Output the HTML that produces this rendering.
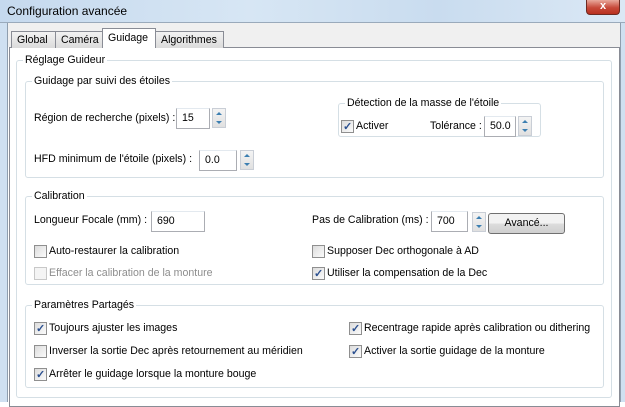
<!DOCTYPE html>
<html><head><meta charset="utf-8"><style>
*{box-sizing:border-box;margin:0;padding:0}
body{width:625px;height:402px;overflow:hidden;position:relative;background:#fff;font-family:"Liberation Sans",sans-serif;font-size:10.6px;color:#000}
.a{position:absolute;white-space:nowrap}
.title{left:0;top:0;width:625px;height:23px;background:linear-gradient(90deg,#c5d9ee 0%,#d7e6f4 40%,#c9dcef 70%,#dbe8f5 100%);border-bottom:1px solid #9aaabb}
.frame{background:#cfe0f1}
.grp{position:absolute;border:1px solid #d5dfe5;border-radius:3px}
.gl{position:absolute;background:#fff;padding:0 2px;top:-8px;left:6px;line-height:14px}
.tb{position:absolute;border:1px solid #abadb3;border-top-color:#e3e9ef;height:21px;background:#fff;padding:3px 5px;line-height:13px}
.sp{position:absolute;width:14px;height:20px;border:1px solid #c9ced6;background:linear-gradient(#f4f4f4,#e0e0e0)}
.sp:before{content:"";position:absolute;left:3px;top:3px;border:3px solid transparent;border-bottom:3px solid #3c7fb1;border-top:0}
.sp:after{content:"";position:absolute;left:3px;top:12px;border:3px solid transparent;border-top:3px solid #3c7fb1;border-bottom:0}
.cb{position:absolute;width:13px;height:13px;border:1px solid #8f8f8f;background:linear-gradient(135deg,#dcdcdc,#fbfbfb)}
.cb.k:after{content:"✓";position:absolute;left:1px;top:-1px;font-size:11px;color:#2a4f8f;font-weight:bold}
.cb.d{border-color:#c8c8c8;background:#f4f4f4}
.tab{position:absolute;top:31px;height:17px;border:1px solid #898c95;border-bottom:none;background:linear-gradient(#f2f2f2,#dbdbdb);padding:2px 5px;line-height:12px}
</style></head><body>
<div class="a title"></div>
<div class="a" style="left:7px;top:4px;font-size:12px">Configuration avancée</div>
<div class="a" style="left:586px;top:0;width:34px;height:15px;background:linear-gradient(#e9a99c,#c7493a 55%,#b8301f);border:1px solid #6d2a22;border-top:none;border-radius:0 0 4px 4px;color:#fff;font-weight:bold;text-align:center;line-height:13px;font-size:11px">x</div>
<div class="a frame" style="left:0;top:23px;width:8px;height:379px;border-right:1px solid #8f9eae"></div>
<div class="a frame" style="left:620px;top:23px;width:5px;height:379px;border-left:1px solid #8f9eae"></div>
<div class="a" style="left:8px;top:23px;width:612px;height:24px;background:#f0f0f0"></div>
<div class="a" style="left:9px;top:47px;width:611px;height:360px;border:1px solid #898c95;background:#fff"></div>
<div class="tab" style="left:11px;width:45px">Global</div>
<div class="tab" style="left:55px;width:48px">Caméra</div>
<div class="tab" style="left:155px;width:69px">Algorithmes</div>
<div class="tab" style="left:102px;top:28px;height:20px;width:54px;background:#fff;padding-top:3px">Guidage</div>

<div class="grp" style="left:16px;top:60px;width:596px;height:338px"><span class="gl">Réglage Guideur</span></div>
<div class="grp" style="left:25px;top:81px;width:579px;height:97px"><span class="gl">Guidage par suivi des étoiles</span></div>
<div class="a" style="left:34px;top:112px">Région de recherche (pixels) :</div>
<div class="tb" style="left:176px;top:108px;width:34px">15</div>
<div class="sp" style="left:212px;top:108px"></div>
<div class="grp" style="left:338px;top:103px;width:203px;height:34px"><span class="gl">Détection de la masse de l'étoile</span></div>
<div class="cb k" style="left:341px;top:120px"></div>
<div class="a" style="left:356px;top:120px">Activer</div>
<div class="a" style="left:430px;top:120px">Tolérance :</div>
<div class="tb" style="left:484px;top:116px;width:32px">50.0</div>
<div class="sp" style="left:518px;top:116px"></div>
<div class="a" style="left:34px;top:153px">HFD minimum de l'étoile (pixels) :</div>
<div class="tb" style="left:199px;top:150px;width:38px">0.0</div>
<div class="sp" style="left:240px;top:150px"></div>

<div class="grp" style="left:25px;top:196px;width:579px;height:89px"><span class="gl">Calibration</span></div>
<div class="a" style="left:34px;top:214px">Longueur Focale (mm) :</div>
<div class="tb" style="left:151px;top:211px;width:54px">690</div>
<div class="a" style="left:312px;top:214px">Pas de Calibration (ms) :</div>
<div class="tb" style="left:431px;top:211px;width:37px">700</div>
<div class="sp" style="left:472px;top:212px"></div>
<div class="a" style="left:488px;top:213px;width:77px;height:21px;border:1px solid #707070;border-radius:3px;background:linear-gradient(#f2f2f2 50%,#dddddd 50%,#cfcfcf);text-align:center;line-height:19px">Avancé...</div>
<div class="cb" style="left:34px;top:245px"></div><div class="a" style="left:49px;top:245px">Auto-restaurer la calibration</div>
<div class="cb" style="left:312px;top:245px"></div><div class="a" style="left:327px;top:245px">Supposer Dec orthogonale à AD</div>
<div class="cb d" style="left:34px;top:267px"></div><div class="a" style="left:49px;top:267px;color:#8d8d8d">Effacer la calibration de la monture</div>
<div class="cb k" style="left:312px;top:267px"></div><div class="a" style="left:327px;top:267px">Utiliser la compensation de la Dec</div>

<div class="grp" style="left:25px;top:305px;width:579px;height:83px"><span class="gl">Paramètres Partagés</span></div>
<div class="cb k" style="left:34px;top:322px"></div><div class="a" style="left:49px;top:322px">Toujours ajuster les images</div>
<div class="cb" style="left:34px;top:345px"></div><div class="a" style="left:49px;top:345px">Inverser la sortie Dec après retournement au méridien</div>
<div class="cb k" style="left:34px;top:368px"></div><div class="a" style="left:49px;top:368px">Arrêter le guidage lorsque la monture bouge</div>
<div class="cb k" style="left:349px;top:322px"></div><div class="a" style="left:364px;top:322px">Recentrage rapide après calibration ou dithering</div>
<div class="cb k" style="left:349px;top:345px"></div><div class="a" style="left:364px;top:345px">Activer la sortie guidage de la monture</div>
</body></html>
